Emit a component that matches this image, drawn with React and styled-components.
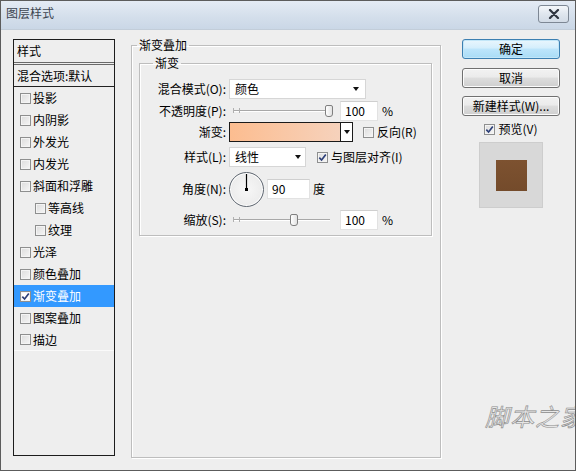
import React from 'react';
import styled, { createGlobalStyle } from 'styled-components';

const GlobalStyle = createGlobalStyle`
  html, body {
    margin: 0;
    padding: 0;
    background: #eeeeee;
  }
  body {
    font-family: "Noto Sans CJK SC", "Liberation Sans", sans-serif;
    font-size: 12px;
    line-height: 16px;
    color: #000;
  }
  * { box-sizing: border-box; }
`;

const Window = styled.div`
  position: relative;
  width: 576px;
  height: 471px;
  border: 1px solid #5c5c5c;
  background: #eeeeee;
  display: flex;
  flex-direction: column;
  overflow: hidden;
`;

const TitleBar = styled.div`
  height: 29px;
  flex: none;
  display: flex;
  align-items: center;
  justify-content: space-between;
  padding: 0 6px 4px 5px;
  background: linear-gradient(#e4ebf4, #d3deeb 60%, #cad7e6);
  border-bottom: 1px solid #c2cdd9;
`;

const Title = styled.span`
  color: #3c4450;
  font-size: 12px;
`;

const CloseBtn = styled.div`
  width: 31px;
  height: 18px;
  margin-top: 2px;
  border: 1px solid #7d8794;
  border-radius: 3px;
  background: linear-gradient(#f4f7fa, #dfe6ee 50%, #d2dbe6);
  display: flex;
  align-items: center;
  justify-content: center;
`;

const Body = styled.div`
  flex: 1;
  display: flex;
  align-items: flex-start;
  padding: 7px 0 0 12px;
`;

/* ---------- left style list ---------- */

const StyleList = styled.div`
  width: 102px;
  height: 417px;
  margin-top: 2px;
  border: 1px solid #1c1c1c;
  background: #eeeeee;
  display: flex;
  flex-direction: column;
`;

const ListHeader = styled.div`
  height: 25px;
  padding: 3px 0 0 3px;
  border-bottom: 3px double #6a6a6a;
`;

const ListBlend = styled.div`
  height: 22px;
  padding: 3px 0 0 3px;
  border-bottom: 1px solid #222;
`;

const ListItem = styled.div`
  height: 22px;
  display: flex;
  align-items: center;
  gap: 2px;
  padding-left: ${p => (p.$indent ? 21 : 6)}px;
  background: ${p => (p.$active ? '#3399ff' : 'transparent')};
  color: ${p => (p.$active ? '#fff' : '#000')};
  border-bottom: ${p => (p.$last ? '1px solid #fafafa' : 'none')};
`;

/* ---------- checkbox ---------- */

const Box = styled.span`
  width: 11px;
  height: 11px;
  flex: none;
  border: 1px solid #8e8f8f;
  background: ${p => (p.$onBlue ? '#fff' : 'linear-gradient(135deg, #dcdcdc, #f6f6f6)')};
  box-shadow: inset 0 0 0 1px #f4f4f4;
  display: inline-flex;
  align-items: center;
  justify-content: center;
`;

const Check = ({ checked, onBlue }) => (
  <Box $onBlue={onBlue}>
    {checked && (
      <svg width="9" height="9" viewBox="0 0 9 9">
        <path d="M1.3 4.6 L3.6 7 L7.8 1.6" fill="none" stroke="#2d3f78" strokeWidth="1.7" />
      </svg>
    )}
  </Box>
);

/* ---------- middle group boxes ---------- */

const Group = styled.fieldset`
  margin: 0 0 0 16px;
  width: 310px;
  height: 421px;
  padding: 2px 8px 0 7px;
  border: 1px solid #bdbdbd;
  box-shadow: inset 1px 1px 0 #fff, 1px 1px 0 #fff;
  border-radius: 0;
`;

const InnerGroup = styled.fieldset`
  margin: 0;
  width: 293px;
  padding: 8px 8px 5px 13px;
  border: 1px solid #bdbdbd;
  box-shadow: inset 1px 1px 0 #fff, 1px 1px 0 #fff;
`;

const Legend = styled.legend`
  padding: 0 2px;
  margin-left: ${p => p.$shift || 0}px;
  line-height: 16px;
  font-size: 12px;
`;

const Row = styled.div`
  display: flex;
  align-items: center;
  height: ${p => p.$h || 20}px;
  margin-top: ${p => p.$mt || 0}px;
`;

const Label = styled.span`
  width: 73px;
  margin-right: 3px;
  text-align: right;
  white-space: nowrap;
  flex: none;
`;

const Select = styled.div`
  position: relative;
  width: ${p => p.$w}px;
  height: 20px;
  background: #fff;
  border: 1px solid #d6d6d6;
  padding: 1px 0 0 5px;
`;

const Arrow = styled.span`
  position: absolute;
  right: ${p => p.$r || 5}px;
  top: 7px;
  width: 0;
  height: 0;
  border-left: 3.5px solid transparent;
  border-right: 3.5px solid transparent;
  border-top: 4px solid #111;
`;

const Slider = styled.div`
  position: relative;
  width: 97px;
  height: 20px;
  margin-left: 4px;
  flex: none;
  &::before {
    content: '';
    position: absolute;
    left: 0;
    right: 0;
    top: 9px;
    height: 1px;
    background: #a8a8a8;
    box-shadow: 0 1px 0 #fff;
  }
  &::after {
    content: '';
    position: absolute;
    left: 0;
    top: 7px;
    width: 5px;
    height: 5px;
    border-left: 1px solid #b0b0b0;
    border-right: 1px solid #b0b0b0;
  }
`;

const Thumb = styled.span`
  position: absolute;
  top: 4px;
  left: ${p => p.$left}px;
  width: 8px;
  height: 12px;
  border: 1px solid #7f7f7f;
  border-radius: 2px 2px 3px 3px;
  background: linear-gradient(90deg, #fff, #e2e2e2);
`;

const NumBox = styled.div`
  width: ${p => p.$w}px;
  height: 20px;
  margin-left: ${p => p.$ml}px;
  flex: none;
  background: #fff;
  border: 1px solid #e2e2e2;
  border-top-color: #cfcfcf;
  padding: 1px 0 0 4px;
`;

const Unit = styled.span`
  margin-left: ${p => p.$ml || 4}px;
`;

const Swatch = styled.div`
  width: 124px;
  height: 20px;
  border: 1px solid #1a1a1a;
  display: flex;
`;

const SwatchFill = styled.div`
  flex: 1;
  background: linear-gradient(90deg, #fcbd90, #f6d2bc);
`;

const SwatchBtn = styled.div`
  position: relative;
  width: 12px;
  background: #fff;
  border-left: 1px solid #1a1a1a;
`;

const CheckLabel = styled.label`
  display: flex;
  align-items: center;
  gap: 3px;
  margin-left: ${p => p.$ml || 0}px;
`;

const Dial = styled.div`
  position: relative;
  width: 35px;
  height: 35px;
  flex: none;
  border-radius: 50%;
  border: 1px solid #5e6670;
  background: radial-gradient(circle at 50% 50%, #f7f7f7, #ececec 70%, #dedede);
  box-shadow: inset 0 0 0 1px #fff;
`;

/* ---------- right column ---------- */

const RightCol = styled.div`
  width: 98px;
  margin: 2px 0 0 21px;
  display: flex;
  flex-direction: column;
  align-items: center;
`;

const Button = styled.div`
  width: 98px;
  height: 20px;
  margin-top: ${p => p.$mt || 0}px;
  border: 1px solid ${p => (p.$primary ? '#3c7fb1' : '#707070')};
  border-radius: 3px;
  display: flex;
  align-items: center;
  justify-content: center;
  background: ${p =>
    p.$primary
      ? 'linear-gradient(#e9f6fd, #d4eefc 45%, #bde5fb 50%, #a9dcf6)'
      : 'linear-gradient(#f2f2f2, #ebebeb 45%, #dddddd 50%, #cfcfcf)'};
  box-shadow: inset 0 0 0 1px ${p => (p.$primary ? '#c2e6f8' : '#fcfcfc')};
`;

const Preview = styled.div`
  width: 64px;
  height: 66px;
  margin-top: 5px;
  background: #d8d8d8;
  border: 1px solid #cdcdcd;
  display: flex;
  align-items: center;
  justify-content: center;
`;

const PreviewSquare = styled.div`
  width: 31px;
  height: 31px;
  background: linear-gradient(#7d5230, #744b2b);
`;

const Watermark = styled.div`
  position: absolute;
  left: 484px;
  top: 400px;
  font-size: 24px;
  line-height: 30px;
  font-style: italic;
  white-space: nowrap;
  color: #e6e6e6;
  -webkit-text-stroke: 0.6px #8c8c8c;
  letter-spacing: 1px;
`;

const effects = [
  { name: '投影' },
  { name: '内阴影' },
  { name: '外发光' },
  { name: '内发光' },
  { name: '斜面和浮雕' },
  { name: '等高线', indent: true },
  { name: '纹理', indent: true },
  { name: '光泽' },
  { name: '颜色叠加' },
  { name: '渐变叠加', active: true },
  { name: '图案叠加' },
  { name: '描边' },
];

export default function App() {
  return (
    <>
      <GlobalStyle />
      <Window>
        <TitleBar>
          <Title>图层样式</Title>
          <CloseBtn>
            <svg width="14" height="10" viewBox="0 0 14 10">
              <path d="M3 1 L11 9 M11 1 L3 9" stroke="#2f3540" strokeWidth="2.2" strokeLinecap="round" />
            </svg>
          </CloseBtn>
        </TitleBar>

        <Body>
          <StyleList>
            <ListHeader>样式</ListHeader>
            <ListBlend>混合选项:默认</ListBlend>
            {effects.map((e, i) => (
              <ListItem
                key={e.name}
                $indent={e.indent}
                $active={e.active}
                $last={i === effects.length - 1}
              >
                <Check checked={e.active} onBlue={e.active} />
                {e.name}
              </ListItem>
            ))}
          </StyleList>

          <Group>
            <Legend $shift={-2}>渐变叠加</Legend>
            <InnerGroup>
              <Legend>渐变</Legend>

              <Row>
                <Label>混合模式(O):</Label>
                <Select $w={137}>
                  颜色
                  <Arrow $r={6} />
                </Select>
              </Row>

              <Row $mt={2}>
                <Label>不透明度(P):</Label>
                <Slider>
                  <Thumb $left={92} />
                </Slider>
                <NumBox $w={38} $ml={10}>100</NumBox>
                <Unit>%</Unit>
              </Row>

              <Row $mt={1}>
                <Label>渐变:</Label>
                <Swatch>
                  <SwatchFill />
                  <SwatchBtn>
                    <Arrow $r={2} />
                  </SwatchBtn>
                </Swatch>
                <CheckLabel $ml={10}>
                  <Check />
                  反向(R)
                </CheckLabel>
              </Row>

              <Row $mt={5}>
                <Label>样式(L):</Label>
                <Select $w={77}>
                  线性
                  <Arrow $r={4} />
                </Select>
                <CheckLabel $ml={11}>
                  <Check checked />
                  与图层对齐(I)
                </CheckLabel>
              </Row>

              <Row $mt={4} $h={36}>
                <Label>角度(N):</Label>
                <Dial>
                  <svg width="33" height="33" viewBox="0 0 33 33">
                    <line x1="16.5" y1="16.5" x2="16.5" y2="1" stroke="#000" strokeWidth="1.2" />
                    <rect x="15" y="15" width="3" height="3" fill="#000" />
                  </svg>
                </Dial>
                <NumBox $w={43} $ml={3}>90</NumBox>
                <Unit $ml={3}>度</Unit>
              </Row>

              <Row $mt={3}>
                <Label>缩放(S):</Label>
                <Slider>
                  <Thumb $left={57} />
                </Slider>
                <NumBox $w={38} $ml={10}>100</NumBox>
                <Unit>%</Unit>
              </Row>
            </InnerGroup>
          </Group>

          <RightCol>
            <Button $primary>确定</Button>
            <Button $mt={9}>取消</Button>
            <Button $mt={8}>新建样式(W)...</Button>
            <Row $mt={5} $h={16}>
              <CheckLabel>
                <Check checked />
                预览(V)
              </CheckLabel>
            </Row>
            <Preview>
              <PreviewSquare />
            </Preview>
          </RightCol>
        </Body>

        <Watermark>脚本之家</Watermark>
      </Window>
    </>
  );
}
